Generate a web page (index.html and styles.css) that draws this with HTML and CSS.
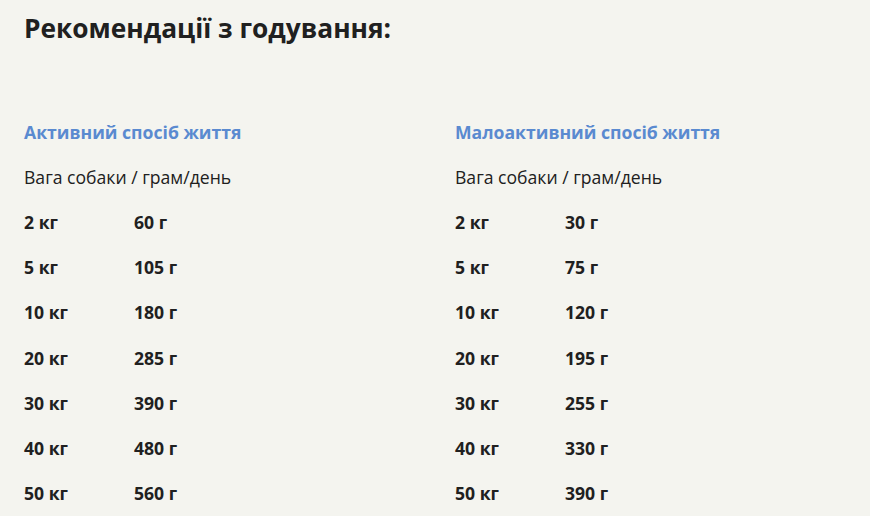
FILE: index.html
```html
<!DOCTYPE html>
<html lang="uk">
<head>
<meta charset="utf-8">
<link rel="stylesheet" href="styles.css">
</head>
<body>
<div class="page">
  <h1 class="title">Рекомендації з годування:</h1>
  <div class="cols">
    <section class="col">
      <h2 class="col-title">Активний спосіб життя</h2>
      <p class="col-sub">Вага собаки / грам/день</p>
      <div class="rows">
        <div class="row"><span class="w">2 кг</span><span class="g">60 г</span></div>
        <div class="row"><span class="w">5 кг</span><span class="g">105 г</span></div>
        <div class="row"><span class="w">10 кг</span><span class="g">180 г</span></div>
        <div class="row"><span class="w">20 кг</span><span class="g">285 г</span></div>
        <div class="row"><span class="w">30 кг</span><span class="g">390 г</span></div>
        <div class="row"><span class="w">40 кг</span><span class="g">480 г</span></div>
        <div class="row"><span class="w">50 кг</span><span class="g">560 г</span></div>
      </div>
    </section>
    <section class="col">
      <h2 class="col-title">Малоактивний спосіб життя</h2>
      <p class="col-sub">Вага собаки / грам/день</p>
      <div class="rows">
        <div class="row"><span class="w">2 кг</span><span class="g">30 г</span></div>
        <div class="row"><span class="w">5 кг</span><span class="g">75 г</span></div>
        <div class="row"><span class="w">10 кг</span><span class="g">120 г</span></div>
        <div class="row"><span class="w">20 кг</span><span class="g">195 г</span></div>
        <div class="row"><span class="w">30 кг</span><span class="g">255 г</span></div>
        <div class="row"><span class="w">40 кг</span><span class="g">330 г</span></div>
        <div class="row"><span class="w">50 кг</span><span class="g">390 г</span></div>
      </div>
    </section>
  </div>
</div>
</body>
</html>
```
FILE: styles.css
```css
html, body {
  margin: 0;
  padding: 0;
  background: #f4f4ef;
}
.page {
  font-family: "Open Sans", "Noto Sans", sans-serif;
  color: #202020;
  padding: 0 24px;
  height: 516px;
  overflow: hidden;
}
.title {
  margin: 0;
  padding-top: 10px;
  font-size: 26.3px;
  line-height: 36px;
  font-weight: 700;
}
.cols {
  display: grid;
  grid-template-columns: 431px 1fr;
  margin-top: 72px;
}
.col-title {
  margin: 0;
  font-size: 17.6px;
  line-height: 28px;
  font-weight: 700;
  color: #5a8ad0;
}
.col-sub {
  margin: 17px 0 0;
  font-size: 17.6px;
  line-height: 28px;
  font-weight: 400;
}
.rows {
  display: flex;
  flex-direction: column;
  gap: 17.2px;
  margin-top: 17px;
}
.row {
  display: grid;
  grid-template-columns: 110px auto;
  font-size: 17.6px;
  line-height: 28px;
  font-weight: 700;
}
```
